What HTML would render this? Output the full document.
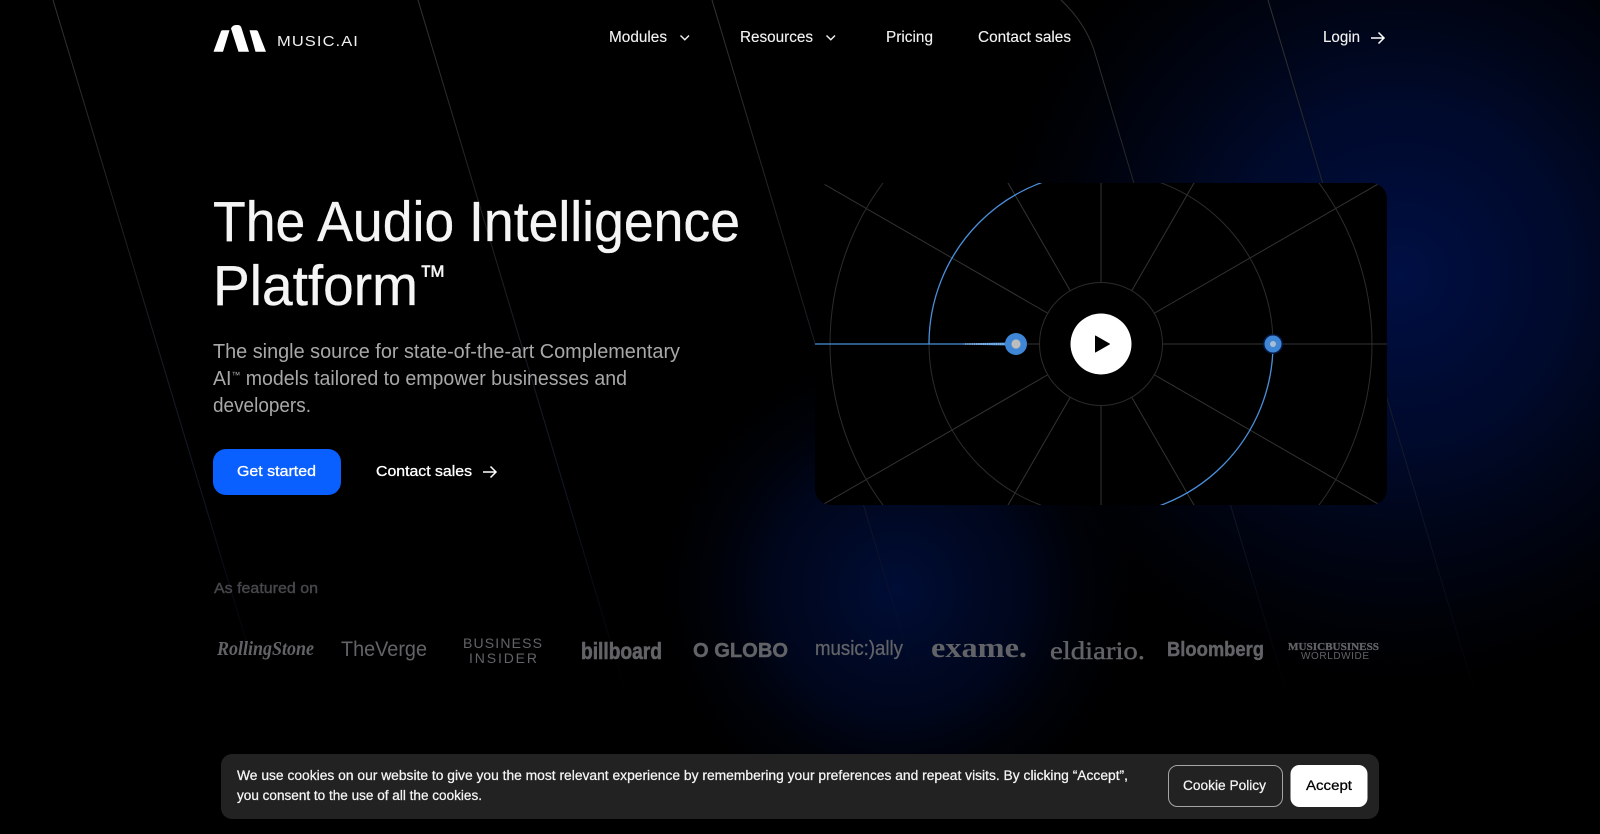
<!DOCTYPE html>
<html lang="en"><head><meta charset="utf-8"><title>Music.AI</title>
<style>
html,body{margin:0;padding:0;background:#000;width:1600px;height:834px;overflow:hidden}
svg{display:block;position:absolute;left:0;top:0}
text{font-family:"Liberation Sans",sans-serif}
.serif{font-family:"Liberation Serif",serif}
.nav{font-size:15.5px;fill:#f2f2f2;stroke:#f2f2f2;stroke-width:.12px}
.logo{fill:#626367}
</style></head><body>
<svg width="1600" height="834" viewBox="0 0 1600 834" xmlns="http://www.w3.org/2000/svg">
<defs>
<radialGradient id="g1" gradientUnits="userSpaceOnUse" cx="1400" cy="275" r="440"><stop offset="0" stop-color="#000f44"/><stop offset=".4" stop-color="#000b32" stop-opacity=".85"/><stop offset=".72" stop-color="#00061c" stop-opacity=".5"/><stop offset="1" stop-color="#000" stop-opacity="0"/></radialGradient>
<radialGradient id="g2" gradientUnits="userSpaceOnUse" cx="897" cy="590" r="260"><stop offset="0" stop-color="#000d36"/><stop offset=".5" stop-color="#000824" stop-opacity=".75"/><stop offset="1" stop-color="#000" stop-opacity="0"/></radialGradient>
<linearGradient id="l" gradientUnits="userSpaceOnUse" x1="0" y1="0" x2="0" y2="710"><stop offset="0" stop-color="#333"/><stop offset=".3" stop-color="#222"/><stop offset=".7" stop-color="#12172a"/><stop offset="1" stop-color="#0a1024" stop-opacity="0"/></linearGradient>
<clipPath id="card"><rect x="815" y="183" width="572" height="322" rx="16"/></clipPath>
</defs>
<rect width="1600" height="834" fill="#000"/>
<rect width="1600" height="834" fill="url(#g1)"/>
<rect width="1600" height="834" fill="url(#g2)"/>
<g fill="none" stroke="url(#l)" stroke-width="1">
<path d="M53 0L246 640"/>
<path d="M418 0L625 690"/>
<path d="M712 0L925 710"/>
<path d="M1061 0C1078 16 1088 32 1094 50L1295 720"/>
<path d="M1268 0L1480 710"/>
</g>

<!-- nav -->
<g fill="#fff">
<path d="M213.5 51.7L221 31.2Q221.4 30.3 222.5 30.3H229.5L223 51.7Z"/>
<path d="M231 28.5Q232.5 25 236 25H238Q240.6 25 241.5 28L249 51.7H238.5Z"/>
<path d="M249.5 30.3H256Q257.5 30.3 258 31.5L266 51.7H255.5Z"/>
</g>
<text x="277" y="46" font-size="15" letter-spacing="1" fill="#f0f0f0" textLength="82" lengthAdjust="spacingAndGlyphs">MUSIC.AI</text>
<text class="nav" x="609" y="42" textLength="58" lengthAdjust="spacingAndGlyphs">Modules</text>
<path d="M680.5 35.5L684.8 39.8L689 35.5" fill="none" stroke="#f2f2f2" stroke-width="1.4"/>
<text class="nav" x="740" y="42" textLength="73" lengthAdjust="spacingAndGlyphs">Resources</text>
<path d="M826.5 35.5L830.8 39.8L835 35.5" fill="none" stroke="#f2f2f2" stroke-width="1.4"/>
<text class="nav" x="886" y="42" textLength="47" lengthAdjust="spacingAndGlyphs">Pricing</text>
<text class="nav" x="978" y="42" textLength="93" lengthAdjust="spacingAndGlyphs">Contact sales</text>
<text class="nav" x="1323" y="42" textLength="37" lengthAdjust="spacingAndGlyphs">Login</text>
<path d="M1371 38H1384M1378.5 32.5L1384 38L1378.5 43.5" fill="none" stroke="#fff" stroke-width="1.5"/>

<!-- hero -->
<g stroke="#f5f5f5" stroke-width=".35" fill="#f5f5f5">
<text x="213" y="241" font-size="57" textLength="527" lengthAdjust="spacingAndGlyphs">The Audio Intelligence</text>
<text x="213" y="305" font-size="57" textLength="205" lengthAdjust="spacingAndGlyphs">Platform</text>
<text x="419" y="286" font-size="30" textLength="27" lengthAdjust="spacingAndGlyphs">™</text>
</g>
<g font-size="20" fill="#a8a8a8">
<text x="213" y="358" textLength="467" lengthAdjust="spacingAndGlyphs">The single source for state-of-the-art Complementary</text>
<text x="213" y="385" textLength="414" lengthAdjust="spacingAndGlyphs">AI<tspan font-size="9" dy="-7">™</tspan><tspan dy="7"> models tailored to empower businesses and</tspan></text>
<text x="213" y="412" textLength="98" lengthAdjust="spacingAndGlyphs">developers.</text>
</g>
<rect x="213" y="449" width="128" height="46" rx="13" fill="#0a5fff"/>
<text x="237" y="476" font-size="15" fill="#fff" stroke="#fff" stroke-width=".3" textLength="79" lengthAdjust="spacingAndGlyphs">Get started</text>
<text x="376" y="476" font-size="15" fill="#fff" stroke="#fff" stroke-width=".3" textLength="96" lengthAdjust="spacingAndGlyphs">Contact sales</text>
<path d="M483 472H496M490.5 466.5L496 472L490.5 477.5" fill="none" stroke="#fff" stroke-width="1.5"/>

<!-- featured -->
<text x="214" y="593" font-size="15" fill="#46474b" stroke="#46474b" stroke-width=".4" textLength="104" lengthAdjust="spacingAndGlyphs">As featured on</text>
<g class="logo">
<text class="serif" x="217" y="655" font-size="20" font-weight="700" font-style="italic" textLength="97" lengthAdjust="spacingAndGlyphs">RollingStone</text>
<text x="341" y="656" font-size="21" textLength="86" lengthAdjust="spacingAndGlyphs">TheVerge</text>
<text x="463" y="648" font-size="14" textLength="79" lengthAdjust="spacing">BUSINESS</text>
<text x="469" y="663" font-size="14" textLength="68" lengthAdjust="spacing">INSIDER</text>
<text x="581" y="659" font-size="23" font-weight="700" stroke="#626367" stroke-width=".6" textLength="81" lengthAdjust="spacingAndGlyphs">billboard</text>
<text x="693" y="657" font-size="20" font-weight="700" stroke="#626367" stroke-width=".4" textLength="95" lengthAdjust="spacingAndGlyphs">O GLOBO</text>
<text x="815" y="655" font-size="20" stroke="#626367" stroke-width=".3" textLength="88" lengthAdjust="spacingAndGlyphs">music:)ally</text>
<text class="serif" x="931" y="657" font-size="29" font-weight="700" textLength="96" lengthAdjust="spacingAndGlyphs">exame.</text>
<text class="serif" x="1050" y="659" font-size="25" stroke="#626367" stroke-width=".4" textLength="95" lengthAdjust="spacingAndGlyphs">eldiario.</text>
<text x="1167" y="656" font-size="20" font-weight="700" stroke="#626367" stroke-width=".4" textLength="97" lengthAdjust="spacingAndGlyphs">Bloomberg</text>
<text class="serif" x="1288" y="650" font-size="10" font-weight="700" stroke="#626367" stroke-width=".3" textLength="91" lengthAdjust="spacingAndGlyphs">MUSICBUSINESS</text>
<text x="1301" y="659" font-size="10" textLength="68" lengthAdjust="spacing">WORLDWIDE</text>
</g>

<!-- video card -->
<rect x="815" y="183" width="572" height="322" rx="16" fill="#000"/>
<g clip-path="url(#card)" fill="none">
<g transform="translate(1101 344)" stroke="#333" stroke-width="1">
<line x1="61" x2="500"/><line x1="61" x2="500" transform="rotate(30)"/><line x1="61" x2="500" transform="rotate(60)"/><line x1="61" x2="500" transform="rotate(90)"/><line x1="61" x2="500" transform="rotate(120)"/><line x1="61" x2="500" transform="rotate(150)"/><line x1="61" x2="500" transform="rotate(180)"/><line x1="61" x2="500" transform="rotate(210)"/><line x1="61" x2="500" transform="rotate(240)"/><line x1="61" x2="500" transform="rotate(270)"/><line x1="61" x2="500" transform="rotate(300)"/><line x1="61" x2="500" transform="rotate(330)"/>
<circle r="61.5" stroke="#2c2c2c"/><circle r="172" stroke="#2c2c2c"/><circle r="271" stroke="#2c2c2c"/>
</g>
<path d="M929 344A172 172 0 0 1 1101 172" stroke="#4a8fdc" stroke-width="1.3"/>
<path d="M1273 344A172 172 0 0 1 1101 516" stroke="#4a8fdc" stroke-width="1.3"/>
<path d="M815 343.4H960L1010 342.5V345.5L960 344.6H815Z" fill="#4a8fdc"/>
<path d="M965 344H1005" stroke="#cfd8e4" stroke-width="1" stroke-dasharray="1.2 1"/>
</g>
<circle cx="1016" cy="344" r="11" fill="#3f86d6"/>
<circle cx="1016" cy="344" r="4.6" fill="#bdbdbd"/>
<circle cx="1273" cy="344" r="10" fill="#041a46"/>
<circle cx="1273" cy="344" r="8.5" fill="#3f86d6"/>
<circle cx="1273" cy="344" r="3" fill="#a9bdd4"/>
<circle cx="1101" cy="344" r="30.5" fill="#fff"/>
<path d="M1095.5 336L1109.5 344L1095.5 352Z" fill="#000" stroke="#000" stroke-width="1" stroke-linejoin="round"/>

<!-- cookie -->
<rect x="221" y="754" width="1158" height="65" rx="11" fill="#222"/>
<g font-size="13.5" fill="#f5f5f5" stroke="#f5f5f5" stroke-width=".25">
<text x="237" y="780" textLength="891" lengthAdjust="spacingAndGlyphs">We use cookies on our website to give you the most relevant experience by remembering your preferences and repeat visits. By clicking “Accept”,</text>
<text x="237" y="800" textLength="245" lengthAdjust="spacingAndGlyphs">you consent to the use of all the cookies.</text>
<text x="1183" y="790" textLength="83" lengthAdjust="spacingAndGlyphs">Cookie Policy</text>
</g>
<rect x="1168.5" y="765.5" width="114" height="41" rx="9" fill="none" stroke="#a5a5a5"/>
<rect x="1290.5" y="765" width="77" height="42" rx="9" fill="#fff"/>
<text x="1306" y="790" font-size="13.5" fill="#000" stroke="#000" stroke-width=".25" textLength="46" lengthAdjust="spacingAndGlyphs">Accept</text>
</svg>
</body></html>
